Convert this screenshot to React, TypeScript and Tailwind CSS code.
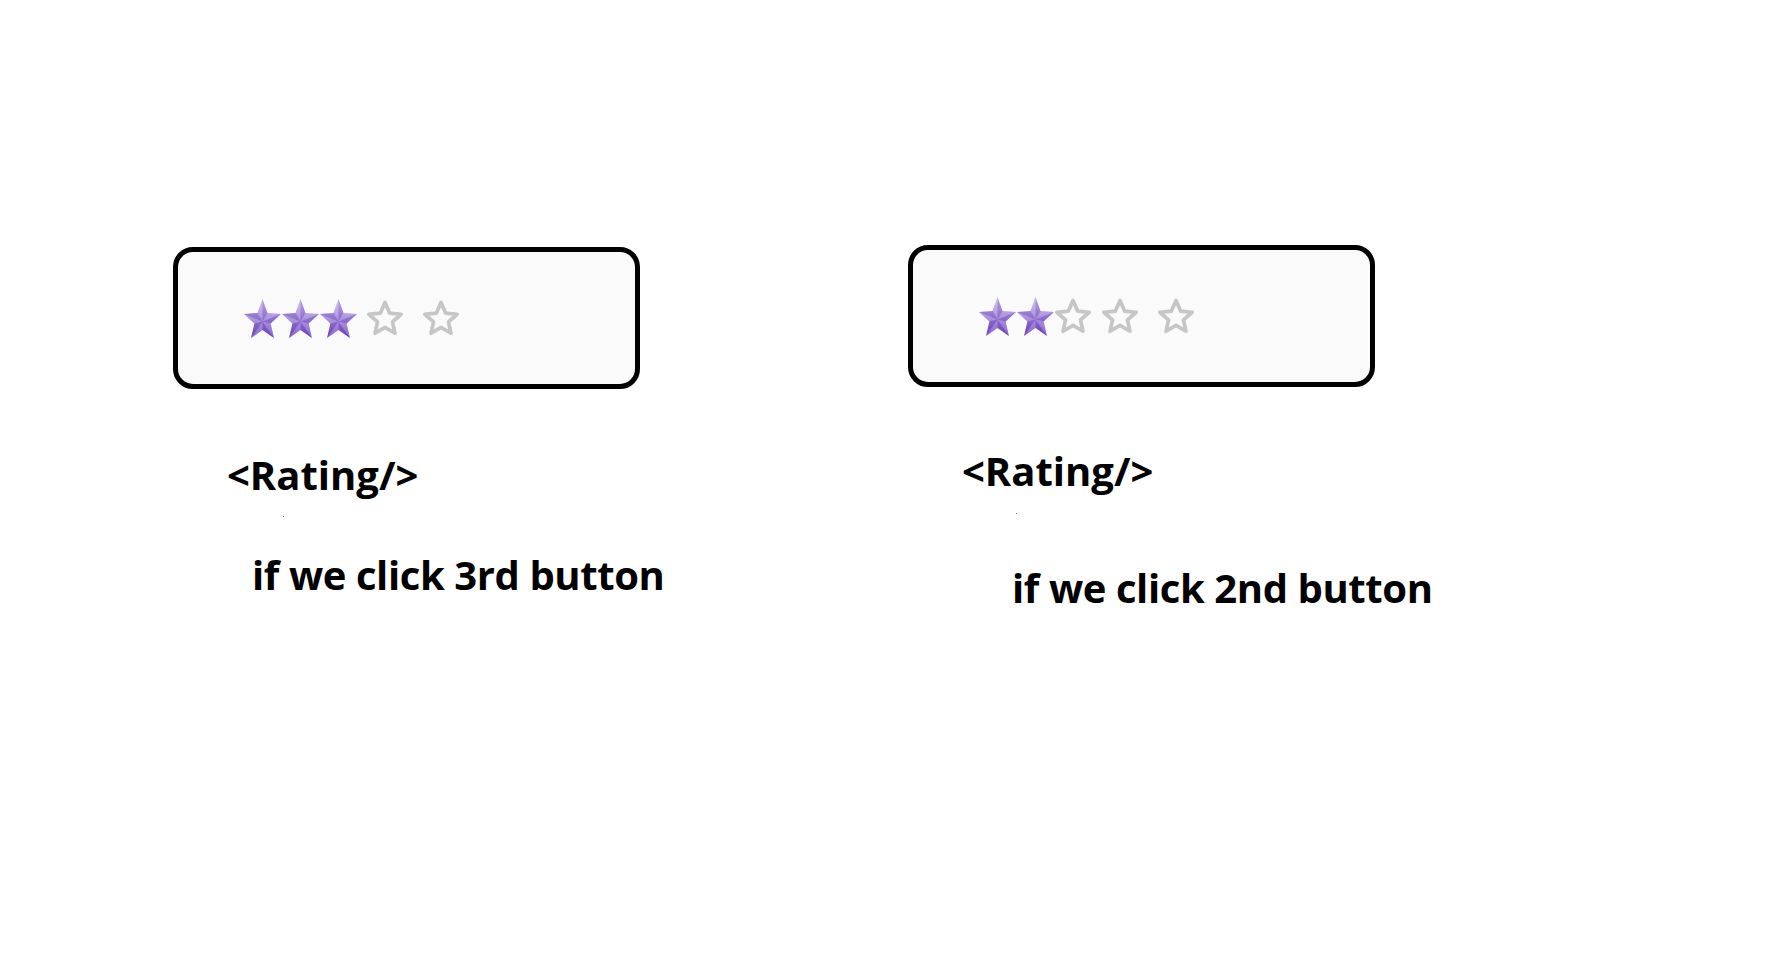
const STAR =
  "50,3 62.93,35.2 97.55,37.55 70.92,59.8 79.39,93.45 50,75 20.61,93.45 29.08,59.8 2.45,37.55 37.07,35.2";

const OUTER = [
  [50, 3],
  [97.55, 37.55],
  [79.39, 93.45],
  [20.61, 93.45],
  [2.45, 37.55],
];
const INNER = [
  [62.93, 35.2],
  [70.92, 59.8],
  [50, 75],
  [29.08, 59.8],
  [37.07, 35.2],
];

function FilledStar({ id }: { id: string }) {
  return (
    <svg width="37" height="39" viewBox="2.45 3 95.1 90.45" preserveAspectRatio="none" className="block">
      <defs>
        <linearGradient id={id} x1="0" y1="0" x2="0" y2="1">
          <stop offset="0" stopColor="#cbb8ec" />
          <stop offset="0.45" stopColor="#a184da" />
          <stop offset="1" stopColor="#6f45c0" />
        </linearGradient>
      </defs>
      <polygon points={STAR} fill={`url(#${id})`} />
      {OUTER.map(([x, y], i) => {
        const a = INNER[(i + 4) % 5];
        const b = INNER[i];
        return (
          <g key={i}>
            <polygon points={`50,55 ${x},${y} ${a[0]},${a[1]}`} fill="#ffffff" opacity="0.18" />
            <polygon points={`50,55 ${x},${y} ${b[0]},${b[1]}`} fill="#3b1a80" opacity="0.12" />
          </g>
        );
      })}
    </svg>
  );
}

function EmptyStar() {
  return (
    <svg width="39" height="37" viewBox="-6 -4 112 108" className="block">
      <polygon
        points="50,3 63.5,34 97.55,37.55 72,60 79.39,93.45 50,76 20.61,93.45 28,60 2.45,37.55 36.5,34"
        fill="none"
        stroke="#c6c6c6"
        strokeWidth="11"
        strokeLinejoin="round"
      />
    </svg>
  );
}

// spacing after each star, taken from the mockup
const gaps = ["ml-0", "ml-0", "ml-0", "ml-[9px]", "ml-[18px]"];

function Rating({ value, name }: { value: number; name: string }) {
  return (
    <div className="w-[467px] h-[142px] rounded-[20px] border-[5px] border-black bg-[#fafafa] flex items-center pl-[65px]">
      {[1, 2, 3, 4, 5].map((n, i) => (
        <button key={n} className={`${gaps[i]} w-[38px] h-[39px] flex items-center justify-center`}>
          {n <= value ? <FilledStar id={`${name}-${n}`} /> : <EmptyStar />}
        </button>
      ))}
    </div>
  );
}

export default function App() {
  return (
    <div
      className="w-[1768px] h-[956px] bg-white flex text-black font-bold whitespace-nowrap"
      style={{ fontFamily: '"Open Sans", "Noto Sans", sans-serif' }}
    >
      <div className="ml-[173px] mt-[247px] w-[467px] shrink-0 flex flex-col">
        <Rating value={3} name="a" />
        <p className="mt-[66px] ml-[54px] text-[40px] leading-[40px]">&lt;Rating/&gt;</p>
        <div className="mt-[21px] ml-[110px] w-px h-px bg-gray-500" />
        <p className="mt-[38px] ml-[79px] text-[40px] leading-[40px] tracking-[-0.4px]">if we click 3rd button</p>
      </div>
      <div className="ml-[268px] mt-[245px] w-[467px] shrink-0 flex flex-col">
        <Rating value={2} name="b" />
        <p className="mt-[64px] ml-[54px] text-[40px] leading-[40px]">&lt;Rating/&gt;</p>
        <div className="mt-[22px] ml-[108px] w-px h-px bg-gray-500" />
        <p className="mt-[54px] ml-[104px] text-[40px] leading-[40px] tracking-[-0.4px]">if we click 2nd button</p>
      </div>
    </div>
  );
}
